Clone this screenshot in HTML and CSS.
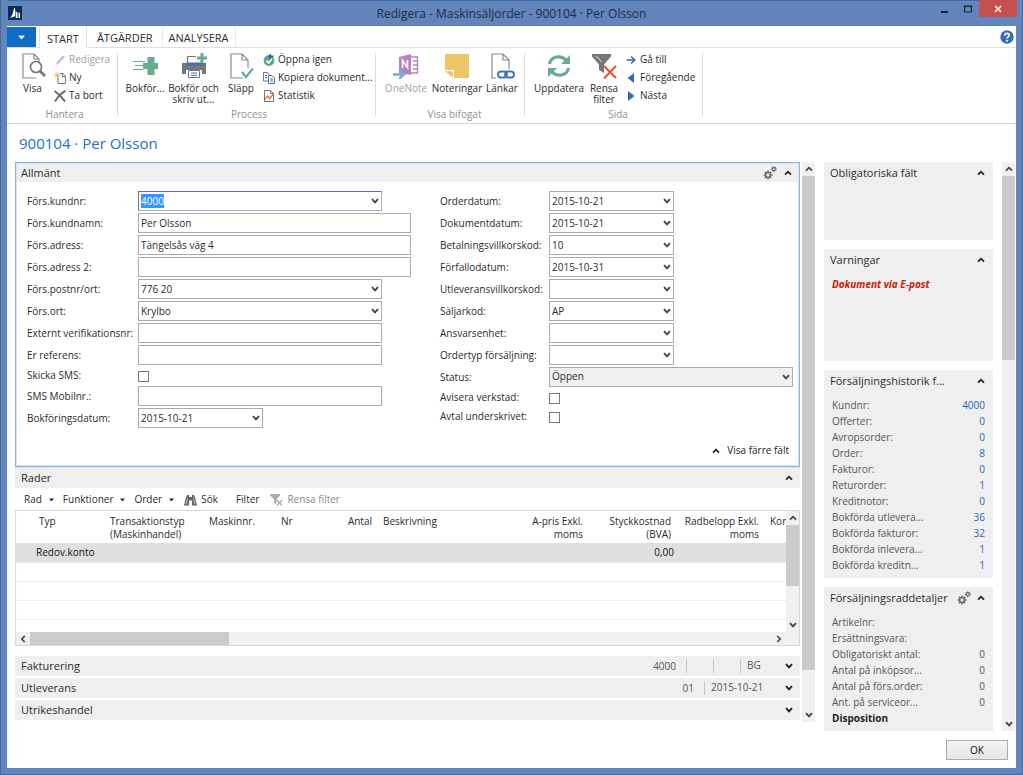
FILE: index.html
```
<!DOCTYPE html>
<html lang="sv">
<head>
<meta charset="utf-8">
<title>Redigera - Maskinsäljorder - 900104 · Per Olsson</title>
<link rel="stylesheet" href="styles.css">
</head>
<body>
<svg class="defs" aria-hidden="true">
  <symbol id="down" viewBox="0 0 8 8"><path d="M1 2.2 4 5.4 7 2.2" fill="none" stroke="currentColor" stroke-width="1.9"/></symbol>
  <symbol id="up" viewBox="0 0 8 8"><path d="M1 5.6 4 2.6 7 5.6" fill="none" stroke="currentColor" stroke-width="1.7"/></symbol>
  <symbol id="left" viewBox="0 0 8 8"><path d="M5.8 1 2.8 4 5.8 7" fill="none" stroke="currentColor" stroke-width="1.7"/></symbol>
  <symbol id="right" viewBox="0 0 8 8"><path d="M2.2 1 5.2 4 2.2 7" fill="none" stroke="currentColor" stroke-width="1.7"/></symbol>
  <symbol id="caret" viewBox="0 0 6 4"><path d="M0 .3h6L3 3.700z" fill="currentColor"/></symbol>
  <symbol id="gears" viewBox="0 0 14 14">
    <g fill="none" stroke="#6a6a6a">
      <circle cx="5" cy="9" r="2.4" stroke-width="1.5"/>
      <path d="M5 4.6v2.2M5 11.2v2.4M.6 9h2.2M7.2 9h2.4M1.9 5.9l1.5 1.5M6.6 10.6l1.5 1.5M8.1 5.9 6.6 7.4M3.4 10.6l-1.5 1.5" stroke-width="1.5"/>
      <circle cx="10.8" cy="3.2" r="1.5" stroke-width="1.2"/>
      <path d="M10.8.2v1.5M10.8 4.7v1.6M7.7 3.2h1.6M12.3 3.2h1.6M8.7 1.1l1 1M11.9 4.3l1 1M12.9 1.1l-1 1M9.7 4.3l-1 1"/>
    </g>
  </symbol>
</svg>

<div class="window">
  <header class="titlebar">
    <svg class="app-icon" viewBox="0 0 14 14" aria-hidden="true"><path fill="#0c2c5c" d="M0 0h14v14H0z"/><path fill="#fff" d="M1.500 12C4 10.500 5.500 6.500 6 1.500L7.200 3v7.200zM7.800 12V5.200L9.600 7v5zM10.600 12V6l1.400 1.200V12z"/></svg>
    <h1 class="window-title">Redigera - Maskinsäljorder - 900104 · Per Olsson</h1>
    <div class="window-buttons">
      <button class="wbtn" aria-label="Minimera"><svg viewBox="0 0 12 12"><path d="M2 9h7" stroke="#152238" stroke-width="2"/></svg></button>
      <button class="wbtn" aria-label="Maximera"><svg viewBox="0 0 12 12"><path d="M2.500 3.500h7v5.500h-7zM2 3h8" fill="none" stroke="#152238" stroke-width="1.200"/></svg></button>
      <button class="wbtn close" aria-label="Stäng"><svg viewBox="0 0 12 12"><path d="M3 3l6 6M9 3 3 9" stroke="#fff" stroke-width="1.500"/></svg></button>
    </div>
  </header>

  <div class="client">
    <nav class="tabs">
      <button class="app-menu" aria-label="Programmeny"><svg viewBox="0 0 6 4"><use href="#caret"/></svg></button>
      <button class="tab active">START</button>
      <button class="tab">ÅTGÄRDER</button>
      <button class="tab">ANALYSERA</button>
      <button class="help" aria-label="Hjälp"><svg viewBox="0 0 14 14"><circle cx="7" cy="7" r="6.700" fill="#376fb3"/><path d="M4.800 5.400C4.800 2.600 9.300 2.700 9.200 5.300 9.100 6.900 7 6.800 7 8.600" fill="none" stroke="#fff" stroke-width="1.700"/><circle cx="7" cy="10.800" r="1" fill="#fff"/></svg></button>
    </nav>

    <div class="ribbon">
      <section class="group g-hantera">
        <div class="group-items">
          <button class="big w-visa"><svg viewBox="0 0 26 26"><path d="M16 25H3V1h11l5 5v3M14 1v5h5" fill="none" stroke="#8a8a8a" stroke-width="1.200"/><circle cx="16" cy="14" r="5.500" fill="#fff" stroke="#777" stroke-width="1.600"/><path d="m20 18 5 5" stroke="#777" stroke-width="2.600"/></svg>Visa</button>
          <div class="small-col">
            <button class="small dim"><svg viewBox="0 0 12 12"><path d="m2 11 1-3 6-6.500L11 3 4.500 9.500z" fill="#a9c3dc"/></svg>Redigera</button>
            <button class="small"><svg viewBox="0 0 12 12"><path d="M4 3.500V11.500h7.400V4L9 1.500H6M8.500 1.500v3h3" fill="none" stroke="#777"/><path d="M3 0v6M0 3h6M1 1l4 4M5 1 1 5" stroke="#e8bd5c" stroke-width=".9"/></svg>Ny</button>
            <button class="small"><svg viewBox="0 0 12 12"><path d="M.5 1C5 4 8 7 11 11.500M11.500.8C7 3 3.500 7 1 11.500" fill="none" stroke="#666" stroke-width="1.900"/></svg>Ta bort</button>
          </div>
        </div>
        <h2 class="group-name">Hantera</h2>
      </section>
      <section class="group g-process">
        <div class="group-items">
          <button class="big w-post"><svg viewBox="0 0 26 26"><path d="M11 10h4.500V4h7v6H26v6h-3.500v6h-7v-6H11z" fill="#6aab8e"/><path d="M1 8.500h12M3 12.500h9M1 16.500h10" stroke="#6aab8e" stroke-width="1.200"/></svg>Bokför...</button>
          <button class="big w-print"><svg viewBox="0 0 26 26"><path d="M6.500 10V3.500H15M20 9V8" fill="none" stroke="#777" stroke-width="1.200"/><path d="M1 10h24v11h-4v-4H5v4H1z" fill="#777"/><path d="M5 9.500h16v3H5z" fill="#3f74b5"/><path d="M7.500 17.500h11v7h-11z" fill="#fff" stroke="#777"/><path d="M10 20h6M10 22.300h6" stroke="#3f74b5"/><path d="M19.500 0h3v3.500H26v3h-3.500V10h-3V6.500H16v-3h3.500z" fill="#6aab8e"/></svg>Bokför och skriv ut...</button>
          <button class="big w-release"><svg viewBox="0 0 26 26"><path d="M15 25H3V1h11l6 6v8M14 1v6h6" fill="none" stroke="#8a8a8a" stroke-width="1.200"/><path d="m14 19 4 5 7-8.500" fill="none" stroke="#6aab8e" stroke-width="2.200"/></svg>Släpp</button>
          <div class="small-col">
            <button class="small"><svg viewBox="0 0 12 12"><circle cx="6" cy="6.500" r="5.400" fill="#5fa386"/><path d="m3.300 6.500 2.200 2.500L9 5" fill="none" stroke="#fff" stroke-width="1.700"/><path d="M6 2.300h4.500M8 .3 6 2.300l2 2" fill="none" stroke="#2f5f9e" stroke-width="1.400"/></svg>Öppna igen</button>
            <button class="small"><svg viewBox="0 0 12 12"><path d="M.5.500h4L6.500 3v6h-6z" fill="#fff" stroke="#777"/><path d="M5.500 3.500H9L11.500 6v5.500h-6z" fill="#fff" stroke="#3f74b5"/><path d="M2 3.500h2M2 5.500h2M7 7h3M7 9h3" stroke="#3f74b5"/></svg>Kopiera dokument...</button>
            <button class="small"><svg viewBox="0 0 12 12"><path d="M1.500.500h6L10.500 3.500v8h-9zM7.500.500v3h3" fill="#fff" stroke="#777"/><path d="M2 9.500 4.500 6l2 2.500L10 4.500" fill="none" stroke="#dd5f3c" stroke-width="1.200"/></svg>Statistik</button>
          </div>
        </div>
        <h2 class="group-name">Process</h2>
      </section>
      <section class="group g-bifogat">
        <div class="group-items">
          <button class="big w-onenote dim"><svg viewBox="0 0 26 26"><path d="M6 4l12-3v21L6 20z" fill="#b583bc"/><path d="M18 4h6.500v16H18M20 8h4M20 12h4M20 16h4" fill="none" stroke="#b583bc" stroke-width="1.400"/><path d="M9.500 15V7.500l5 7V7" fill="none" stroke="#fff" stroke-width="1.700"/><path d="M0 21.500h9M6 17l5 4.500L6 26" fill="none" stroke="#7aa8da" stroke-width="2.400"/></svg>OneNote</button>
          <button class="big w-notes"><svg viewBox="0 0 26 26"><path d="M1 1h24v24H10V17H1z" fill="#eec468"/><path d="M1 18.200h7.800V25z" fill="#eec468"/></svg>Noteringar</button>
          <button class="big w-links"><svg viewBox="0 0 26 26"><path d="M7 25H3V1h11l6 6v9M14 1v6h6" fill="none" stroke="#8a8a8a" stroke-width="1.200"/><rect x="9" y="18.500" width="9" height="6" rx="3" fill="none" stroke="#3f74b5" stroke-width="1.800"/><rect x="16" y="18.500" width="9" height="6" rx="3" fill="none" stroke="#3f74b5" stroke-width="1.800"/></svg>Länkar</button>
        </div>
        <h2 class="group-name">Visa bifogat</h2>
      </section>
      <section class="group g-sida">
        <div class="group-items">
          <button class="big w-refresh"><svg viewBox="0 0 26 26"><path d="M3.500 11C5 3 15 1.500 20.500 7.500M22.500 15C21 23 11 24.500 5.500 18.500" fill="none" stroke="#6aab8e" stroke-width="3.200"/><path d="M24 2v9H15zM2 24v-9h9z" fill="#6aab8e"/></svg>Uppdatera</button>
          <button class="big w-clear"><svg viewBox="0 0 26 26"><path d="M1 1h19v2.500l-7 8V20l-5-3v-5.500l-7-8z" fill="#777"/><path d="M4.500 4h2l4 5" fill="none" stroke="#ddd"/><path d="m13 13 12 12M25 13 13 25.500" stroke="#e0593b" stroke-width="2.200"/></svg>Rensa filter</button>
          <div class="small-col">
            <button class="small"><svg viewBox="0 0 12 12"><path d="M1.500 6h8M6 2.500 9.800 6 6 9.500" fill="none" stroke="#2f6cb3" stroke-width="1.600"/></svg>Gå till</button>
            <button class="small"><svg viewBox="0 0 12 12"><path d="M9 1v10L2.500 6z" fill="#2f6cb3"/></svg>Föregående</button>
            <button class="small"><svg viewBox="0 0 12 12"><path d="M3 1v10l6.500-5z" fill="#2f6cb3"/></svg>Nästa</button>
          </div>
        </div>
        <h2 class="group-name">Sida</h2>
      </section>
    </div>

    <h2 class="page-title">900104 · Per Olsson</h2>

    <div class="workspace">
      <main class="main">
        <section class="general">
          <header class="bar">
            <h3>Allmänt</h3>
            <svg class="gears"><use href="#gears"/></svg>
            <button class="chev" aria-label="Dölj Allmänt"><svg><use href="#up"/></svg></button>
          </header>
          <form class="form" id="order">
            <div class="col">
              <div class="field"><label for="f1">Förs.kundnr:</label><span class="combo mid active"><input id="f1" value="4000" autofocus><button type="button" aria-label="Välj"><svg><use href="#down"/></svg></button></span></div>
              <div class="field"><label for="f2">Förs.kundnamn:</label><input class="text wide" id="f2" value="Per Olsson"></div>
              <div class="field"><label for="f3">Förs.adress:</label><input class="text wide" id="f3" value="Tängelsås väg 4"></div>
              <div class="field"><label for="f4">Förs.adress 2:</label><input class="text wide" id="f4"></div>
              <div class="field"><label for="f5">Förs.postnr/ort:</label><span class="combo mid"><input id="f5" value="776 20"><button type="button" aria-label="Välj"><svg><use href="#down"/></svg></button></span></div>
              <div class="field"><label for="f6">Förs.ort:</label><span class="combo mid"><input id="f6" value="Krylbo"><button type="button" aria-label="Välj"><svg><use href="#down"/></svg></button></span></div>
              <div class="field"><label for="f7">Externt verifikationsnr:</label><input class="text mid" id="f7"></div>
              <div class="field"><label for="f8">Er referens:</label><input class="text mid" id="f8"></div>
              <div class="field tick"><label for="f9">Skicka SMS:</label><input type="checkbox" id="f9"></div>
              <div class="field"><label for="f10">SMS Mobilnr.:</label><input class="text mid" id="f10"></div>
              <div class="field"><label for="f11">Bokföringsdatum:</label><span class="combo short"><input id="f11" value="2015-10-21"><button type="button" aria-label="Välj"><svg><use href="#down"/></svg></button></span></div>
            </div>
            <div class="col">
              <div class="field"><label for="r1">Orderdatum:</label><span class="combo short"><input id="r1" value="2015-10-21"><button type="button" aria-label="Välj"><svg><use href="#down"/></svg></button></span></div>
              <div class="field"><label for="r2">Dokumentdatum:</label><span class="combo short"><input id="r2" value="2015-10-21"><button type="button" aria-label="Välj"><svg><use href="#down"/></svg></button></span></div>
              <div class="field"><label for="r3">Betalningsvillkorskod:</label><span class="combo short"><input id="r3" value="10"><button type="button" aria-label="Välj"><svg><use href="#down"/></svg></button></span></div>
              <div class="field"><label for="r4">Förfallodatum:</label><span class="combo short"><input id="r4" value="2015-10-31"><button type="button" aria-label="Välj"><svg><use href="#down"/></svg></button></span></div>
              <div class="field"><label for="r5">Utleveransvillkorskod:</label><span class="combo short"><input id="r5"><button type="button" aria-label="Välj"><svg><use href="#down"/></svg></button></span></div>
              <div class="field"><label for="r6">Säljarkod:</label><span class="combo short"><input id="r6" value="AP"><button type="button" aria-label="Välj"><svg><use href="#down"/></svg></button></span></div>
              <div class="field"><label for="r7">Ansvarsenhet:</label><span class="combo short"><input id="r7"><button type="button" aria-label="Välj"><svg><use href="#down"/></svg></button></span></div>
              <div class="field"><label for="r8">Ordertyp försäljning:</label><span class="combo short"><input id="r8"><button type="button" aria-label="Välj"><svg><use href="#down"/></svg></button></span></div>
              <div class="field"><label for="r9">Status:</label><span class="combo mid status"><select id="r9"><option>Öppen</option></select><svg><use href="#down"/></svg></span></div>
              <div class="field tick"><label for="r10">Avisera verkstad:</label><input type="checkbox" id="r10"></div>
              <div class="field tick"><label for="r11">Avtal underskrivet:</label><input type="checkbox" id="r11"></div>
            </div>
          </form>
          <div class="fewer-row"><button class="fewer"><svg><use href="#up"/></svg>Visa färre fält</button></div>
        </section>

        <section class="lines">
          <header class="bar">
            <h3>Rader</h3>
            <button class="chev" aria-label="Dölj Rader"><svg><use href="#up"/></svg></button>
          </header>
          <div class="toolbar">
            <button class="t-menu">Rad<svg><use href="#caret"/></svg></button>
            <button class="t-menu">Funktioner<svg><use href="#caret"/></svg></button>
            <button class="t-menu">Order<svg><use href="#caret"/></svg></button>
            <button class="t-search"><svg viewBox="0 0 13 12"><path d="M3 1h2v2h3V1h2l1.500 4L13 11.500H8V6.500H5v5H0L1.500 5z" fill="#666"/><path d="M3.500 4.500 2 10M9.500 4.500 11 10" stroke="#ddd" stroke-width=".8"/></svg>Sök</button>
            <button class="t-filter">Filter</button>
            <button class="t-clear dim"><svg viewBox="0 0 13 12"><path d="M0 0h10v1.500L6.500 5v5L4 8.500V5L0 1.500z" fill="#aaa"/><path d="m7 6 5 5.500M12 6l-5 5.500" stroke="#aaa" stroke-width="1.200"/></svg>Rensa filter</button>
          </div>
          <div class="grid">
            <div class="grid-body">
              <table>
                <colgroup><col class="c-typ"><col class="c-trans"><col class="c-mask"><col class="c-nr"><col class="c-antal"><col><col class="c-num"><col class="c-num"><col class="c-num"><col class="c-kor"></colgroup>
                <thead><tr><th class="first">Typ</th><th>Transaktionstyp (Maskinhandel)</th><th>Maskinnr.</th><th>Nr</th><th class="num">Antal</th><th>Beskrivning</th><th class="num">A-pris Exkl.<br>moms</th><th class="num">Styckkostnad (BVA)</th><th class="num">Radbelopp Exkl. moms</th><th>Kor</th></tr></thead>
                <tbody>
                  <tr class="selected"><td class="first">Redov.konto</td><td></td><td></td><td></td><td></td><td></td><td></td><td class="num">0,00</td><td></td><td></td></tr>
                  <tr><td colspan="10"></td></tr>
                  <tr><td colspan="10"></td></tr>
                  <tr><td colspan="10"></td></tr>
                </tbody>
              </table>
              <div class="vscroll"><svg><use href="#up"/></svg><span class="thumb thumb-grid"></span><svg><use href="#down"/></svg></div>
            </div>
            <div class="hscroll"><svg><use href="#left"/></svg><span class="thumb"></span><svg><use href="#right"/></svg></div>
          </div>
        </section>

        <section class="bar tab-row"><h3>Fakturering</h3><span class="sum">4000</span><span class="sum cell"></span><span class="sum cell"></span><span class="sum cell bg">BG</span><button class="chev" aria-label="Visa Fakturering"><svg><use href="#down"/></svg></button></section>
        <section class="bar tab-row"><h3>Utleverans</h3><span class="sum">01</span><span class="sum cell date">2015-10-21</span><button class="chev" aria-label="Visa Utleverans"><svg><use href="#down"/></svg></button></section>
        <section class="bar tab-row"><h3>Utrikeshandel</h3><button class="chev" aria-label="Visa Utrikeshandel"><svg><use href="#down"/></svg></button></section>
      </main>

      <div class="vscroll main-scroll"><svg><use href="#up"/></svg><span class="thumb thumb-main"></span><svg><use href="#down"/></svg></div>

      <aside class="facts">
        <section class="fact short-box"><header><h3>Obligatoriska fält</h3><button class="chev" aria-label="Dölj"><svg><use href="#up"/></svg></button></header></section>
        <section class="fact warn-box"><header><h3>Varningar</h3><button class="chev" aria-label="Dölj"><svg><use href="#up"/></svg></button></header><p class="warning">Dokument via E-post</p></section>
        <section class="fact"><header><h3>Försäljningshistorik f...</h3><button class="chev" aria-label="Dölj"><svg><use href="#up"/></svg></button></header>
          <dl class="links">
            <div><dt>Kundnr:</dt><dd><a href="#order">4000</a></dd></div>
            <div><dt>Offerter:</dt><dd><a href="#order">0</a></dd></div>
            <div><dt>Avropsorder:</dt><dd><a href="#order">0</a></dd></div>
            <div><dt>Order:</dt><dd><a href="#order">8</a></dd></div>
            <div><dt>Fakturor:</dt><dd><a href="#order">0</a></dd></div>
            <div><dt>Returorder:</dt><dd><a href="#order">1</a></dd></div>
            <div><dt>Kreditnotor:</dt><dd><a href="#order">0</a></dd></div>
            <div><dt>Bokförda utlevera...</dt><dd><a href="#order">36</a></dd></div>
            <div><dt>Bokförda fakturor:</dt><dd><a href="#order">32</a></dd></div>
            <div><dt>Bokförda inlevera...</dt><dd><a href="#order">1</a></dd></div>
            <div><dt>Bokförda kreditn...</dt><dd><a href="#order">1</a></dd></div>
          </dl>
        </section>
        <section class="fact"><header><h3>Försäljningsraddetaljer</h3><svg class="gears"><use href="#gears"/></svg><button class="chev" aria-label="Dölj"><svg><use href="#up"/></svg></button></header>
          <dl>
            <div><dt>Artikelnr:</dt><dd></dd></div>
            <div><dt>Ersättningsvara:</dt><dd></dd></div>
            <div><dt>Obligatoriskt antal:</dt><dd>0</dd></div>
            <div><dt>Antal på inköpsor...</dt><dd>0</dd></div>
            <div><dt>Antal på förs.order:</dt><dd>0</dd></div>
            <div><dt>Ant. på serviceor...</dt><dd>0</dd></div>
          </dl>
          <h4 class="disposition">Disposition</h4>
        </section>
      </aside>

      <div class="vscroll"><svg><use href="#up"/></svg><span class="thumb thumb-facts"></span><svg><use href="#down"/></svg></div>
    </div>

    <footer class="footer"><button class="ok">OK</button></footer>
  </div>
</div>
<script src="app.js"></script>
</body>
</html>
```
FILE: styles.css
```
* { box-sizing: border-box; }
body {
  margin: 0;
  font: 10px/13px "Open Sans", "Noto Sans", sans-serif;
  color: #2b2b2b;
  background: #6285bb;
}
button, input, select { font: inherit; color: inherit; }
button { border: 0; padding: 0; background: none; white-space: nowrap; }
h1, h2, h3, h4, p, dl, dd { margin: 0; font-weight: 400; }
svg { display: block; flex: none; }
.defs { position: absolute; width: 0; height: 0; }

/* Window frame */
.window {
  min-height: 100vh;
  display: flex;
  flex-direction: column;
  padding: 0 6px 6px;
  border: 1px solid #4568a0;
  border-top: 0;
  background: #6285bb;
}
.titlebar {
  height: 26px;
  display: grid;
  grid-template-columns: 1fr auto 1fr;
  box-shadow: 0 1px 0 #4568a0 inset;
}
.app-icon { width: 14px; height: 14px; margin: 6px 1px; }
.window-title { font-size: 12px; line-height: 27px; color: #1d2c45; }
.window-buttons { display: flex; justify-content: flex-end; margin-right: -1px; }
.wbtn { width: 23px; height: 17px; display: grid; place-items: center; }
.wbtn svg { width: 12px; height: 12px; }
.wbtn.close { width: 38px; background: #c84f4f; }
.client { flex: 1; display: flex; flex-direction: column; background: #fff; }

/* Tabs */
.tabs {
  height: 22px;
  display: flex;
  padding: 1px 2px 0 0;
  border-bottom: 1px solid #dcdfe3;
}
.app-menu { width: 29px; margin-right: 3px; background: #0f6cc5; color: #fff; display: grid; place-items: center; }
.app-menu svg { width: 7px; height: 5px; }
.tab { padding: 1px 6px 0; font-size: 11px; border-right: 1px solid #e4ebf3; }
.tab + .tab { padding: 1px 9px 0 10px; }
.tab + .tab + .tab { padding: 1px 6px 0; }
.tab.active { padding: 1px 7px 0; border-left: 1px solid #dcdfe3; border-right-color: #dcdfe3; background: #fff; margin-bottom: -1px; }
.help { margin-left: auto; }
.help svg { width: 14px; height: 14px; }

/* Ribbon */
.ribbon { display: flex; border-bottom: 1px solid #d8dadc; height: 76px; }
.group { position: relative; flex: none; padding: 4px 0 0 4px; }
.group::after { content: ""; position: absolute; right: 0; top: 5px; bottom: 7px; width: 1px; background: #dcdcdc; }
.g-hantera { width: 111px; }
.g-process { width: 258px; }
.g-bifogat { width: 149px; padding-left: 8px; }
.g-sida { width: 178px; padding-left: 8px; }
.group-items { display: flex; height: 56px; }
.group-name { font-size: 10px; line-height: 13px; color: #8f8f8f; text-align: center; }
.big { display: flex; flex-direction: column; align-items: center; white-space: normal; line-height: 11px; padding-top: 1px; }
.big svg { width: 26px; height: 26px; margin-bottom: 4px; }
.w-visa { width: 43px; }
.w-post { width: 46px; }
.w-print { width: 51px; }
.w-release { width: 44px; }
.w-onenote { width: 44px; }
.w-notes { width: 58px; }
.w-links { width: 32px; }
.w-refresh { width: 52px; }
.w-clear { width: 40px; padding: 1px 5px 0 3px; }
.small-col { display: grid; grid-auto-rows: 15px; gap: 3px; align-content: start; justify-items: start; }
.small { display: flex; align-items: center; gap: 3px; }
.small svg { width: 12px; height: 12px; }
.dim { color: #a0a0a0; }

.page-title { font-size: 15px; line-height: 20px; color: #1f6fc6; padding: 9px 12px; }

/* Workspace */
.workspace {
  flex: 1;
  display: grid;
  grid-template-columns: minmax(0, 1fr) 13px 187px 13px;
  padding: 0 1px 0 8px;
}
.main { margin-right: 2px; }
.bar { display: flex; align-items: center; background: #efefef; padding: 0 7px 0 6px; }
.bar h3, .fact h3 { font-size: 11px; line-height: 16px; }
.bar h3 { margin-right: auto; }
.chev { width: 8px; height: 8px; }
.chev svg { width: 8px; height: 8px; color: #222; }
.gears { width: 14px; height: 14px; margin-right: 7px; }

.general { border: 1px solid #8db3e3; box-shadow: 0 0 0 1px #d3e2f5 inset; padding: 1px; }
.general .bar { height: 18px; padding: 0 6px 0 4px; }
.form { display: grid; grid-template-columns: 413px 1fr; padding: 9px 5px 0 10px; }
.col { display: grid; gap: 2px; align-content: start; }
.field { display: flex; height: 20px; align-items: center; }
.field label { width: 111px; flex: none; }
.col + .col label { width: 109px; }
.tick { height: 17px; }
.tick input {
  appearance: none;
  width: 11px; height: 11px;
  margin: 1px 0 0;
  border: 1px solid #777;
  background: #fff;
}
.text, .combo { height: 20px; border: 1px solid #ababab; background: #fff; }
.text, .combo input, .combo select { padding: 0 2px 1px; outline: 0; border-radius: 0; }
.wide { width: 273px; }
.mid { width: 244px; }
.short { width: 125px; }
.combo { display: flex; align-items: center; }
.combo input, .combo select { flex: 1; min-width: 0; height: 18px; border: 0; background: none; }
.combo button, .status svg { width: 8px; height: 8px; margin-right: 2px; }
.combo button svg, .status svg { width: 8px; height: 8px; color: #444; }
.combo.active { border-color: #6c6fa8 #a9abd0 #a9abd0 #6c6fa8; }
.combo.active input::selection { background: #3399ff; color: #fff; }
.combo.status { background: #f0f0f0; }
.status select { appearance: none; }
.fewer-row { display: flex; justify-content: flex-end; padding: 16px 9px 8px; }
.fewer { display: flex; align-items: center; gap: 7px; color: #222; }
.fewer svg { width: 8px; height: 8px; }

/* Lines */
.lines { border-top: 1px solid #d3e2f5; }
.lines .bar { height: 20px; }
.toolbar { display: flex; align-items: center; height: 22px; padding: 1px 0 0 9px; }
.toolbar button { display: flex; align-items: center; }
.t-menu { gap: 7px; margin-right: 9px; }
.t-menu svg { width: 5px; height: 4px; }
.t-search { gap: 4px; margin: 0 18px 0 1px; }
.t-filter { margin-right: 11px; }
.t-clear { gap: 4px; }
.t-search svg, .t-clear svg { width: 13px; height: 12px; }
.toolbar .dim { color: #888; }
.grid { border: 1px solid #d8d8d8; margin-bottom: 10px; }
.grid-body { display: flex; height: 121px; }
table { flex: 1; min-width: 0; width: 0; table-layout: fixed; border-collapse: collapse; align-self: flex-start; }
.c-typ { width: 86px; }
.c-trans { width: 99px; }
.c-mask { width: 72px; }
.c-nr { width: 62px; }
.c-antal { width: 40px; }
.c-num { width: 88px; }
.c-kor { width: 24px; }
th { height: 32px; font-weight: 400; text-align: left; vertical-align: top; padding: 4px 0 2px 8px; overflow: hidden; }
td { height: 19px; padding: 0; border-bottom: 1px solid #ececec; }
th.num { text-align: right; padding: 4px 3px 2px 0; }
td.num { text-align: right; }
th.first { padding-left: 23px; }
td.first { padding-left: 20px; }
.selected { background: #dfdfdf; color: #111; }

/* Scroll bars */
.vscroll { width: 13px; display: flex; flex-direction: column; align-items: center; background: #f0f0f0; padding: 3px 0; }
.vscroll svg, .hscroll svg { width: 8px; height: 8px; color: #444; }
.thumb { background: #cbcbcb; }
.vscroll .thumb { width: 13px; margin: 3px 0 auto; }
.thumb-grid { height: 61px; }
.thumb-main { height: 494px; }
.thumb-facts { height: 184px; }
.main-scroll { margin-bottom: 9px; }
.hscroll { display: flex; align-items: center; height: 13px; background: #f0f0f0; padding: 0 16px 0 3px; }
.hscroll .thumb { width: 26%; height: 13px; margin: 0 auto 0 3px; }

/* Collapsed sections */
.tab-row { height: 20px; margin-bottom: 2px; }
.sum { color: #555; margin-right: 10px; }
.cell { height: 14px; width: 17px; border-left: 1px solid #c6c6c6; }
.bg { width: 31px; margin-right: 14px; padding-left: 6px; }
.date { width: 67px; margin-right: 14px; padding-left: 6px; }

/* Fact boxes */
.facts { display: grid; gap: 9px; align-content: start; margin-left: 9px; width: 169px; }
.fact { background: #efefef; padding: 2px 8px 5px; }
.fact header { display: flex; align-items: center; height: 17px; margin-left: -2px; }
.fact h3 { margin-right: auto; }
.fact .gears { margin-right: 6px; }
.short-box { min-height: 78px; }
.warn-box { min-height: 112px; }
.fact dl { padding-top: 8px; }
.fact dl div { display: flex; justify-content: space-between; height: 16px; align-items: center; color: #555; }
.fact a { color: #2468bd; text-decoration: none; }
.warning { padding-top: 10px; color: #c5200b; font-weight: 700; font-style: italic; }
.disposition { font-weight: 700; line-height: 16px; color: #222; }

.footer { display: flex; justify-content: flex-end; padding: 9px 8px 8px; }
.ok { width: 62px; height: 20px; border: 1px solid #acacac; background: linear-gradient(#f3f3f3, #e6e6e6); color: #111; }
```
FILE: app.js
```
const first = document.getElementById('f1');
first.focus();
first.select();
```
